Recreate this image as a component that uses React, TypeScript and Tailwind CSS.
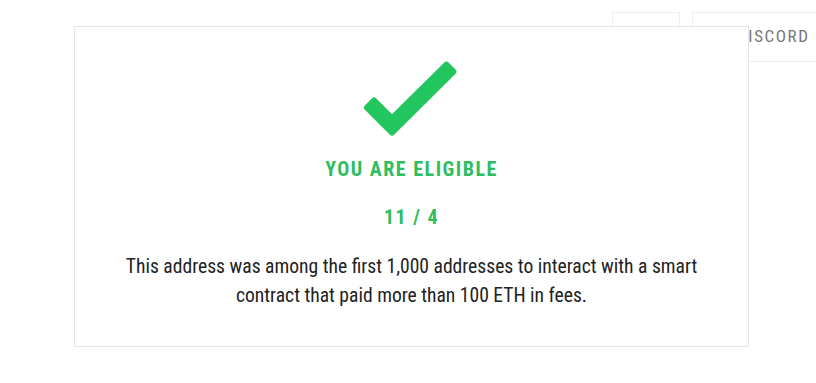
import React from 'react';

function NavBar() {
  return (
    <div className="flex justify-end pt-3 gap-3">
      <div className="w-[68px] h-[48px] border border-[#eeeeee] border-b-0"></div>
      <div className="w-[124px] h-[50px] border-t border-l border-b border-[#eeeeee] flex items-center pl-[44px] text-[17px] tracking-[1.6px] text-[#777777]">
        DISCORD
      </div>
    </div>
  );
}

function CheckIcon() {
  return (
    <svg width="115" height="90" viewBox="0 0 115 90" className="block">
      <polygon
        points="20,45.5 13,52.6 38,77.5 99.4,16.6 92.4,9.6 38,63.4"
        fill="#22c55e"
        stroke="#22c55e"
        strokeWidth="6"
        strokeLinejoin="round"
      />
    </svg>
  );
}

export default function App() {
  return (
    <div
      className="relative w-[816px] h-[383px] bg-white overflow-hidden"
      style={{ fontFamily: '"Roboto Condensed", Roboto, "Liberation Sans", sans-serif' }}
    >
      <NavBar />

      {/* modal */}
      <div className="absolute left-[74px] top-[26px] w-[675px] h-[321px] bg-white border border-[#e6e6e6] flex flex-col items-center">
        <div className="mt-[28px]">
          <CheckIcon />
        </div>
        <h2 className="mt-[14px] text-[20px] font-bold tracking-[1.5px] text-[#2ebd5f] leading-none">
          YOU ARE ELIGIBLE
        </h2>
        <p className="mt-[28px] text-[20px] font-bold tracking-[1.5px] text-[#2ebd5f] leading-none">
          11 / 4
        </p>
        <p className="mt-[25px] w-[610px] text-center text-[19.6px] leading-[29px] text-[#222222]">
          This address was among the first 1,000 addresses to interact with a smart contract that paid more than 100 ETH in fees.
        </p>
      </div>
    </div>
  );
}
